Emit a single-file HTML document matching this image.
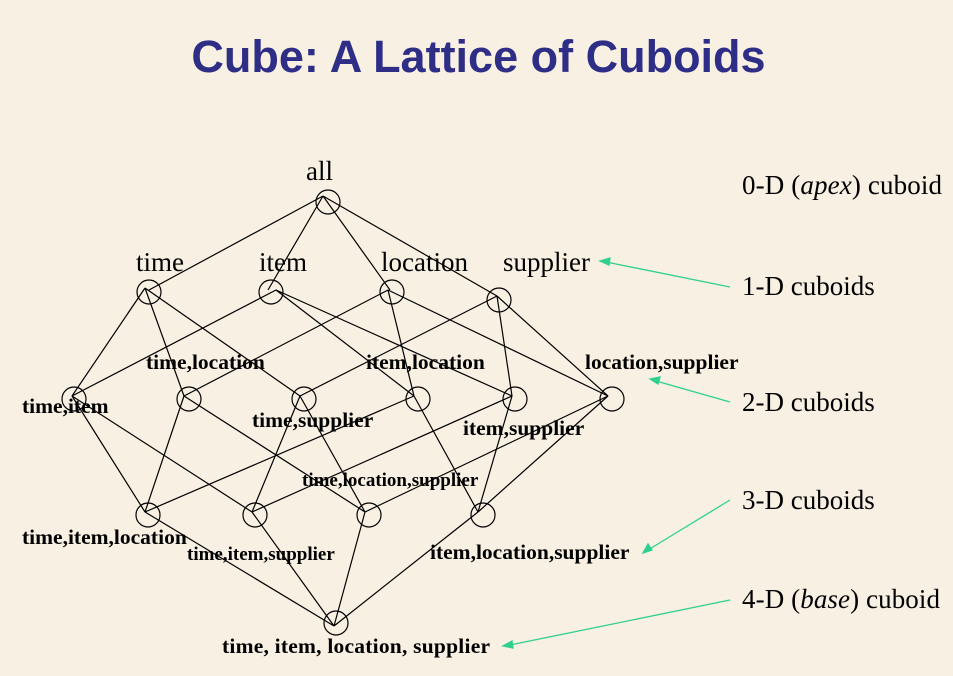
<!DOCTYPE html>
<html><head><meta charset="utf-8"><style>
body{margin:0;width:953px;height:676px;background:#f8f0e2;overflow:hidden;position:relative}
h1{position:absolute;left:0;width:953px;top:31px;margin:0;text-align:center;font:bold 45px "Liberation Sans",sans-serif;color:#2e2e86;padding-left:2px}
</style></head><body>
<h1>Cube: A Lattice of Cuboids</h1>
<svg width="953" height="676" style="position:absolute;left:0;top:0" font-family="Liberation Serif, serif">
<g stroke="#000" stroke-width="1.2" fill="none">
<path d="M323,196L149,290M323,196L268,290M323,196L390,290M323,196L497,296"/>
<path d="M145,288L72,396M145,288L184,396M145,288L300,396"/>
<path d="M276,290L72,396M276,290L414,396M276,290L512,396"/>
<path d="M388,290L184,396M388,290L414,396M388,290L608,396"/>
<path d="M497,296L300,396M497,296L512,396M497,296L608,396"/>
<path d="M72,396L145,512M184,396L145,512M414,396L145,512"/>
<path d="M72,396L252,512M300,396L252,512M512,396L252,512"/>
<path d="M184,396L365,512M300,396L365,512M608,396L365,512"/>
<path d="M414,396L478,512M512,396L478,512M608,396L478,512"/>
<path d="M145,512L334,626M252,512L334,626M365,512L334,626M478,512L334,626"/>
</g>
<g stroke="#000" stroke-width="1.2" fill="none">
<circle cx="328" cy="202" r="12"/>
<circle cx="149" cy="292" r="12"/><circle cx="271" cy="292" r="12"/><circle cx="392" cy="292" r="12"/><circle cx="499" cy="300" r="12"/>
<circle cx="74" cy="399" r="12"/><circle cx="189" cy="399" r="12"/><circle cx="304" cy="399" r="12"/><circle cx="418" cy="399" r="12"/><circle cx="515" cy="399" r="12"/><circle cx="612" cy="399" r="12"/>
<circle cx="148" cy="515" r="12"/><circle cx="255" cy="515" r="12"/><circle cx="369" cy="515" r="12"/><circle cx="483" cy="515" r="12"/>
<circle cx="336" cy="623" r="12"/>
</g>
<g font-size="27" fill="#000">
<text x="306" y="180">all</text>
<text x="136" y="271">time</text><text x="259" y="271">item</text><text x="381" y="271">location</text><text x="503" y="271">supplier</text>
<text x="742" y="194" textLength="200">0-D (<tspan font-style="italic">apex</tspan>) cuboid</text>
<text x="742" y="295">1-D cuboids</text>
<text x="742" y="411">2-D cuboids</text>
<text x="742" y="509">3-D cuboids</text>
<text x="742" y="608" textLength="198">4-D (<tspan font-style="italic">base</tspan>) cuboid</text>
</g>
<g font-size="21.5" font-weight="bold" fill="#000">
<text x="146" y="369">time,location</text><text x="366" y="369">item,location</text><text x="585" y="369">location,supplier</text>
<text x="22" y="413">time,item</text><text x="252" y="427">time,supplier</text><text x="463" y="435">item,supplier</text>
<text x="302" y="486" font-size="19">time,location,supplier</text>
<text x="22" y="544">time,item,location</text><text x="187" y="560" font-size="19">time,item,supplier</text><text x="430" y="559">item,location,supplier</text>
<text x="222" y="653" textLength="268">time, item, location, supplier</text>
</g>
<g stroke="#2fd08f" stroke-width="1.3" fill="#2fd08f">
<path d="M730,287L606,262" fill="none"/><path d="M600,261l10,-3l-1,7z"/>
<path d="M730,402L656,381" fill="none"/><path d="M650,379l10,-2l-2,7z"/>
<path d="M730,500L648,550" fill="none"/><path d="M643,553l5,-9l4,6z"/>
<path d="M730,600L510,645" fill="none"/><path d="M503,646l9,-5l1,7z"/>
</g>
</svg>
</body></html>
